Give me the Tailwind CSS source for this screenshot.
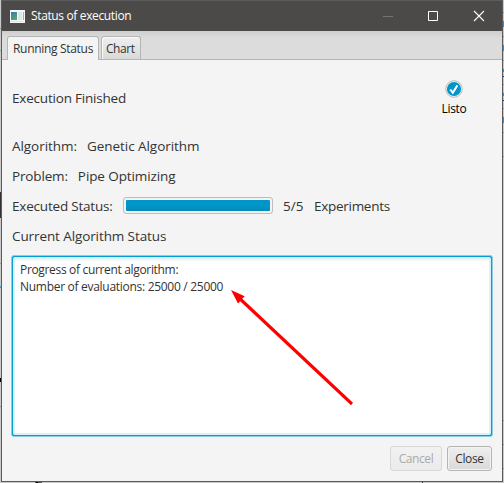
<!DOCTYPE html>
<html lang="en">
<head>
<meta charset="utf-8">
<title>Status of execution</title>
<script src="https://cdn.jsdelivr.net/npm/@tailwindcss/browser@4"></script>
</head>
<body class="relative h-[483px] w-[504px] overflow-hidden bg-[#c9c9c9] pl-px font-['Open_Sans','Noto_Sans',sans-serif] text-[#333333]">
<!-- slivers of the desktop behind the window -->
<svg class="absolute inset-0" width="504" height="483" shape-rendering="crispEdges">
<path d="M0 28h1M0 50h1M0 263h1M0 406h1M503 12h1M503 36h1M503 60h1M503 84h1M503 108h1M503 132h1M503 156h1M503 420h1M503 444h1M503 468h1" stroke="#999"/>
<path d="M0 192h1v26H0z" fill="#333"/><path d="M0 378h1v4H0z" fill="#000"/><path d="M0 286h1v2H0z" fill="#4ba3c7"/>
<path d="M503 21h1v6h-1zM503 45h1v6h-1zM503 69h1v3h-1zM503 93h1v3h-1zM503 117h1v6h-1z" fill="#4c88b5"/>
<path d="M503 76h1v1h-1zM503 100h1v1h-1z" fill="#24366b"/>
<path d="M35 482h7v1h-7z" fill="#555"/><path d="M36 482h2v1h-2z" fill="#000"/><path d="M422 482h1v1h-1z" fill="#333"/>
</svg>
<main class="relative flex h-[482px] w-[502px] flex-col border border-[#5b5b5b] bg-[#f4f4f4]">
  <header class="flex h-[30px] shrink-0 items-center bg-[#4c4a48] pl-2 text-white">
    <svg width="15" height="13" viewBox="0 0 15 13">
      <defs><linearGradient id="ico" x1="0" y1="0" x2="0.4" y2="1"><stop stop-color="#3d78a3"/><stop offset="1" stop-color="#4ca67b"/></linearGradient></defs>
      <path d="M0 0h15v13H0z" fill="#f5f7f7"/><path d="M1 2h6v8H1z" fill="url(#ico)"/><path d="M8 2h4v8H8z" fill="#dfe5e5"/><path d="M13 2h1v8h-1z" fill="#8fb6ac"/><path d="M1 11h13v1H1z" fill="#dce1e1"/>
    </svg>
    <h1 class="ml-[6px] text-[12px] leading-4 tracking-[-0.36px]">Status of execution</h1>
    <svg class="ml-auto mr-[17px]" width="102" height="12" viewBox="0 0 102 12" fill="none">
      <path d="M0 6.5h10" stroke="#777573"/><path d="M45.5 1.5h9v9h-9z" stroke="#fff"/><path d="m91 1 10 10m0-10L91 11" stroke="#fff" stroke-width="1.1"/>
    </svg>
  </header>
  <nav class="flex h-[29px] shrink-0 items-end gap-[2px] border-b border-[#b5b5b5] bg-[linear-gradient(#cecece,#dcdcdc_25%)] pl-[5px] text-[12px] leading-4">
    <div class="relative -mb-px h-[24px] w-[92px] rounded-t-[3px] border border-b-0 border-[#b5b5b5] bg-[#f4f4f4] pt-[4px] pl-[5px] whitespace-nowrap"><span class="tracking-[-0.31px]">Running Status</span></div>
    <div class="h-[23px] w-[40px] rounded-t-[3px] border border-b-0 border-[#b5b5b5] bg-[linear-gradient(#efefef,#d9d9d9)] pt-[4px] pl-[4px] shadow-[inset_1px_1px_0_#fafafa]"><span class="tracking-[-0.45px]">Chart</span></div>
  </nav>
  <section class="flex flex-1 flex-col px-[10px] text-[13.5px] leading-[18px]">
    <div class="flex h-[77px] justify-between pt-[20px]">
      <p class="pt-[9px]"><span class="tracking-[-0.2px]">Execution Finished</span></p>
      <div class="mr-[24px] flex w-[28px] flex-col items-center text-[12px] leading-4 text-black">
        <svg class="shrink-0" width="18" height="18" viewBox="0 0 18 18"><circle cx="9" cy="9" r="8.3" fill="#f3f3f3" stroke="#bcbcbc"/><circle cx="9" cy="9" r="7.1" fill="#0096c9"/><path d="m5.3 9.5 2.5 3.2 4.6-7.3" fill="none" stroke="#fff" stroke-width="2"/></svg>
        <span class="mt-[3px] tracking-[-0.3px]">Listo</span>
      </div>
    </div>
    <p class="flex h-[30px] gap-[10px]"><span class="tracking-[-0.05px]">Algorithm:</span><span class="tracking-[-0.05px]">Genetic Algorithm</span></p>
    <p class="flex h-[30px] gap-[10px]"><span class="tracking-[-0.15px]">Problem:</span><span class="tracking-[-0.1px]">Pipe Optimizing</span></p>
    <div class="flex h-[30px]">
      <span class="w-[111px] whitespace-nowrap tracking-[-0.2px]">Executed Status:</span>
      <div class="h-[17px] w-[150px] rounded-[3px] border border-[#bdbdbd] bg-[#f3f3f3] p-[2px]"><div class="h-[11px] rounded-[1px] bg-[linear-gradient(#0096c9_50%,#078bb8)]"></div></div>
      <span class="ml-[10px] w-[31px]">5/5</span><span class="tracking-[-0.28px]">Experiments</span>
    </div>
    <p class="h-[28px]"><span class="tracking-[-0.1px]">Current Algorithm Status</span></p>
    <div class="-ml-px h-[182px] w-[482px] rounded-[3px] border border-[#8bcde3] bg-[#039ed3] p-px">
      <div class="h-full rounded-[2px] border-2 border-[#daf2f9] bg-white pt-[2px] pl-[5px] text-[12px] leading-[17px] shadow-[inset_0_3px_3px_-2px_#ececec]">
        <p><span class="tracking-[-0.33px]">Progress of current algorithm:</span></p>
        <p><span class="tracking-[-0.29px]">Number of evaluations: 25000 / 25000</span></p>
      </div>
    </div>
    <footer class="mt-[9px] flex justify-end gap-[5px] text-[12px] leading-4">
      <button disabled class="h-[25px] w-[52px] rounded-[3px] border border-[#d8d8d8] bg-[linear-gradient(#f2f2f2,#ebebeb)] text-[#aaa] tracking-[-0.4px]">Cancel</button>
      <button class="h-[25px] w-[45px] rounded-[3px] border border-[#b5b5b5] bg-[linear-gradient(#efefef,#d9d9d9)] text-[#333] tracking-[-0.35px] shadow-[inset_0_0_0_1px_#f3f3f3]">Close</button>
    </footer>
  </section>
</main>
<!-- annotation arrow -->
<svg class="absolute inset-0" width="504" height="483" fill="red"><path d="M231 290 244.7 296.2 242.3 298.8 353 402.8 351 405.2 240.2 301.2 238 303.5z"/></svg>
</body>
</html>
